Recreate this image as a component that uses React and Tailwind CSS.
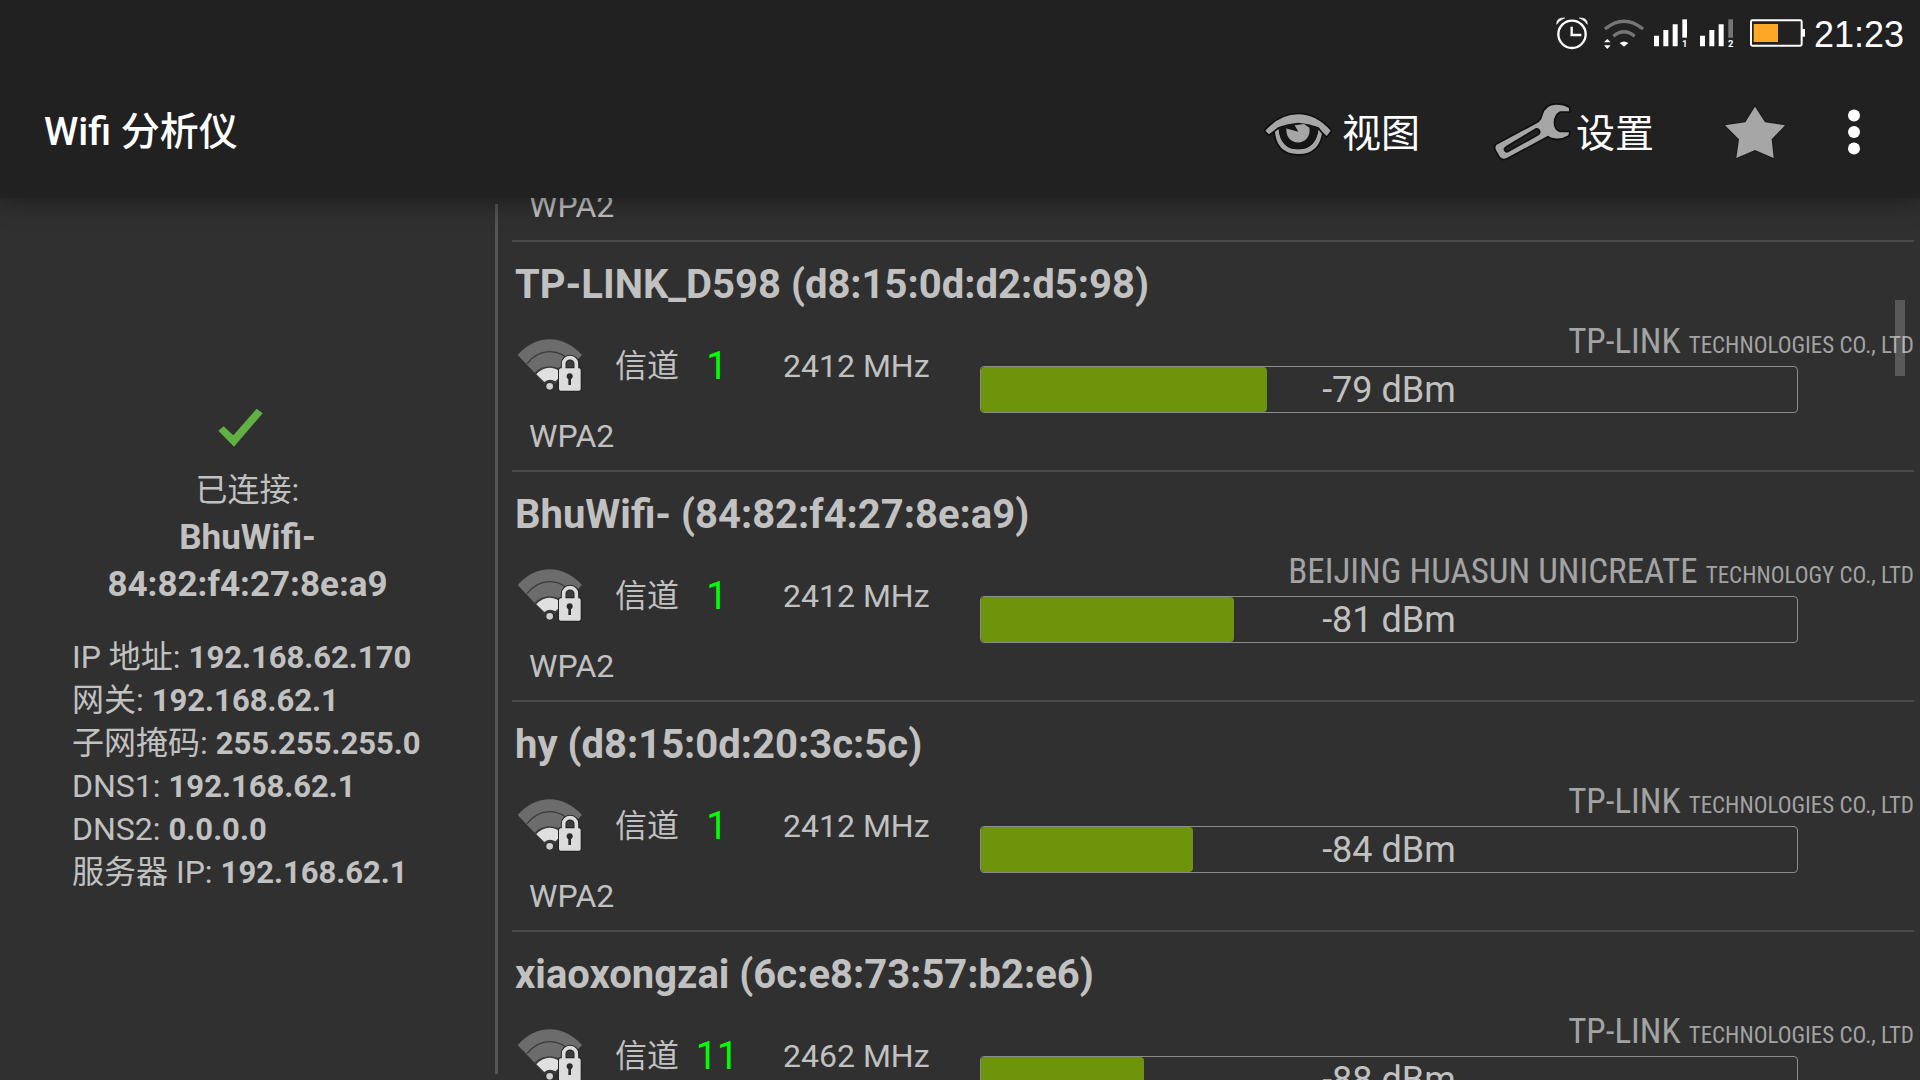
import React from "react";

const networks = [
  {
    name: "TP-LINK_D598 (d8:15:0d:d2:d5:98)",
    channel: 1,
    freq: 2412,
    level: -79,
    percent: 35,
    vendor: "TP-LINK",
    vendorRest: "TECHNOLOGIES CO., LTD",
  },
  {
    name: "BhuWifi- (84:82:f4:27:8e:a9)",
    channel: 1,
    freq: 2412,
    level: -81,
    percent: 31,
    vendor: "BEIJING HUASUN UNICREATE",
    vendorRest: "TECHNOLOGY CO., LTD",
  },
  {
    name: "hy (d8:15:0d:20:3c:5c)",
    channel: 1,
    freq: 2412,
    level: -84,
    percent: 26,
    vendor: "TP-LINK",
    vendorRest: "TECHNOLOGIES CO., LTD",
  },
  {
    name: "xiaoxongzai (6c:e8:73:57:b2:e6)",
    channel: 11,
    freq: 2462,
    level: -88,
    percent: 20,
    vendor: "TP-LINK",
    vendorRest: "TECHNOLOGIES CO., LTD",
  },
];

const details = [
  ["IP 地址:", "192.168.62.170"],
  ["网关:", "192.168.62.1"],
  ["子网掩码:", "255.255.255.0"],
  ["DNS1:", "192.168.62.1"],
  ["DNS2:", "0.0.0.0"],
  ["服务器 IP:", "192.168.62.1"],
];

const AlarmIcon = () => (
  <svg className="w-[42px] h-[50px]" viewBox="0 0 126 150" fill="none">
    <circle cx="66" cy="73" r="41" stroke="#fff" strokeWidth="7" />
    <path d="M65 50v25h29" stroke="#fff" strokeWidth="7" />
    <path d="M20 43Q20 22 44 24Q28 30 20 43ZM112 43Q112 22 88 24Q104 30 112 43Z" fill="#fff" stroke="#fff" strokeWidth="2" />
  </svg>
);

const StatusWifiIcon = () => (
  <svg className="w-[46px] h-[50px]" viewBox="0 0 138 150" fill="none">
    <path d="M15 57Q72 10 129 57" stroke="#757575" strokeWidth="10" />
    <path d="M40 79Q72 52 104 79" stroke="#757575" strokeWidth="10" />
    <path d="M59 99Q72 90 85 99L72 110Z" fill="#fff" />
    <path d="M12 97L22 87L32 97ZM12 106L22 117L32 106Z" fill="#fff" />
  </svg>
);

const SignalIcon = ({ sim, lastColor }) => (
  <svg className="w-[38px] h-[50px]" viewBox="0 0 114 150" fill="#fff">
    <path d="M0 77h15v32H0ZM28 60h15v49H28ZM56 43h15v66H56Z" />
    <path d="M85 28h14v55H85Z" fill={lastColor} />
    <text x="92" y="110" fontSize="28" fontWeight="700" textAnchor="middle">
      {sim}
    </text>
  </svg>
);

const BatteryIcon = () => (
  <svg className="w-[60px] h-[50px]" viewBox="0 0 180 150">
    <rect x="15" y="31" width="152" height="76" rx="4" fill="none" stroke="#fff" strokeWidth="6" />
    <path d="M168 57h9v23h-9Z" fill="#fff" />
    <path d="M23 42h73v54H23Z" fill="#ffa726" />
  </svg>
);

const EyeIcon = () => (
  <svg className="w-[82px] h-16" viewBox="0 0 246 192">
    <g fill="#a6a6a6" stroke="#0f0f0f" strokeWidth="10" strokeLinejoin="round" paintOrder="stroke">
      <path d="M44 88Q48 162 114 162Q180 162 187 92L175 88Q168 148 114 148Q62 148 56 88Z" />
      <path d="M16 92Q60 43 114 43Q168 43 212 92L200 108Q186 96 176 82Q148 72 114 72Q80 72 54 82Q42 92 27 103Z" />
    </g>
    <path d="M56 86Q80 70 114 68Q150 70 176 86Q168 148 114 148Q62 148 56 86Z" fill="#151515" />
    <path d="M80 83A35 36 0 1 0 148 83L132 72L104 76L115 95L82 86Z" fill="#a6a6a6" />
  </svg>
);

const WrenchIcon = () => (
  <svg className="w-24 h-16" viewBox="0 0 288 192">
    <path
      d="M50 134L176 67Q186 58 188 46Q196 14 228 14Q252 14 267 24V34H240Q222 42 221 68Q221 90 240 97H267L265 106Q246 118 224 115Q212 113 204 107L80 174Q68 180 60 170L48 150Q44 140 50 134ZM72 144Q68 150 76 157Q80 160 86 156L176 106Q184 100 181 92Q178 82 168 84L78 138Z"
      fill="#a6a6a6"
      fillRule="evenodd"
      stroke="#0f0f0f"
      strokeWidth="10"
      strokeLinejoin="round"
      paintOrder="stroke"
    />
  </svg>
);

const StarIcon = () => (
  <svg className="w-[72px] h-16" viewBox="0 0 216 192">
    <path
      d="M123 20L153 67L213 76L173 118L179 174L123 150L67 174L75 118L33 76L94 67Z"
      fill="#a6a6a6"
      stroke="#1a1a1a"
      strokeWidth="6"
      paintOrder="stroke"
    />
  </svg>
);

const DotsIcon = () => (
  <svg className="w-4 h-16" viewBox="0 0 16 64" fill="#fff">
    <circle cx="8" cy="15.5" r="6" />
    <circle cx="8" cy="32" r="6" />
    <circle cx="8" cy="48.5" r="6" />
  </svg>
);

const CheckIcon = () => (
  <svg className="w-[60px] h-10" viewBox="0 0 180 120">
    <path d="M1 68L17 55L46 82L116 2L134 16L48 116Z" fill="#60b044" />
  </svg>
);

const LockedWifiIcon = () => (
  <svg className="w-[72px] h-[60px]" viewBox="-3 0 216 180">
    <path d="M5 57Q48 10 101 10Q154 10 198 57L101 158Z" fill="#6c6c6c" />
    <path d="M33 83Q62 47 101 47Q142 47 170 83" fill="none" stroke="#3a3a3a" strokeWidth="4" />
    <path d="M56 110Q76 91 101 91Q126 91 146 110L101 158Z" fill="#3a3a3a" />
    <path d="M61 115Q78 95 101 95Q124 95 141 115L118 136Q101 126 85 138Z" fill="#e0e0e0" />
    <circle cx="101" cy="152" r="15" fill="#303030" />
    <circle cx="101" cy="151" r="10" fill="#d0d0d0" />
    <path d="M143 99V83a19 18 0 0 1 38 0V99" fill="#3c3c3c" stroke="#222" strokeWidth="17" />
    <rect x="126" y="94" width="71" height="73" rx="7" fill="#222" />
    <path d="M143 99V83a19 18 0 0 1 38 0V99" fill="none" stroke="#dcdcdc" strokeWidth="11" />
    <rect x="129" y="97" width="65" height="67" rx="5" fill="#dcdcdc" />
    <circle cx="161" cy="121" r="9" fill="#2a2a2a" />
    <path d="M157 121h8v26h-8Z" fill="#2a2a2a" />
  </svg>
);

const SignalBar = ({ level, percent }) => (
  <div
    role="meter"
    aria-label="dBm"
    aria-valuemin={-100}
    aria-valuemax={-40}
    aria-valuenow={level}
    className="relative h-[47px] mr-[116px] border border-[#8c8c8c] rounded"
  >
    <div className="h-full bg-[#6d940a] rounded" style={{ width: `${percent}%` }}></div>
    <span className="absolute inset-0 flex items-center justify-center text-[36px]">
      {level} dBm
    </span>
  </div>
);

const NetworkRow = ({ network }) => (
  <li className="shrink-0 pt-[18px] pb-5 pl-[3px] border-b-2 border-[#4a4a4a]">
    <h2 className="text-[40px] leading-[50px] font-bold">{network.name}</h2>
    <div className="grid grid-cols-[100px_64px_76px_225px_1fr] h-[112px] items-center">
      <LockedWifiIcon />
      <span>信道</span>
      <span className="text-[38px] text-center text-[#00ff00]">{network.channel}</span>
      <span className="pl-7">{network.freq} MHz</span>
      <div className="self-start pt-2">
        <p className="text-[35px] leading-[48px] text-right text-[#a3a3a3] whitespace-nowrap font-['Roboto_Condensed',Roboto,sans-serif]">
          {network.vendor}{" "}
          <span className="text-[23px] leading-none">{network.vendorRest}</span>
        </p>
        <SignalBar level={network.level} percent={network.percent} />
      </div>
    </div>
    <p className="pl-3.5 leading-[28px]">WPA2</p>
  </li>
);

const App = () => {
  return (
    <div className="flex flex-col h-screen overflow-hidden bg-[#303030] text-[#c1c1c1] text-[32px] font-[Roboto,'Noto_Sans_CJK_SC',sans-serif]">
      <header className="relative z-10 shrink-0 bg-[#212121] text-white shadow-[0_4px_24px_rgba(0,0,0,0.4)]">
        <div className="flex items-center justify-end gap-2 h-[66px] pt-1 pr-4">
          <AlarmIcon />
          <StatusWifiIcon />
          <SignalIcon sim="1" lastColor="#ffffff" />
          <SignalIcon sim="2" lastColor="#757575" />
          <BatteryIcon />
          <span className="text-[36px] font-['Liberation_Sans',sans-serif]">21:23</span>
        </div>
        <div className="flex items-center justify-between h-[132px] pl-11 pr-[58px] text-[39px]">
          <h1 className="font-medium">Wifi 分析仪</h1>
          <nav className="flex items-center gap-15">
            <button className="flex items-center">
              <EyeIcon />
              <span className="pt-1">视图</span>
            </button>
            <button className="flex items-center">
              <WrenchIcon />
              <span className="pt-1">设置</span>
            </button>
            <button aria-label="收藏">
              <StarIcon />
            </button>
            <button aria-label="更多">
              <DotsIcon />
            </button>
          </nav>
        </div>
      </header>

      <main className="relative flex grow min-h-0">
        <aside className="w-[498px] shrink-0 my-1.5 pt-[204px] border-r-3 border-[#555555]">
          <div className="flex flex-col items-center text-center">
            <CheckIcon />
            <p className="mt-[19px] leading-[47px]">已连接:</p>
            <p className="text-[35px] leading-[47px] font-bold">
              BhuWifi-
              <br />
              84:82:f4:27:8e:a9
            </p>
          </div>
          <dl className="mt-7 pl-[72px]">
            {details.map(([label, value]) => (
              <div key={label} className="flex items-baseline gap-2 leading-[43px]">
                <dt>{label}</dt>
                <dd className="text-[31px] font-bold">{value}</dd>
              </div>
            ))}
          </dl>
        </aside>

        <ul className="flex flex-col grow ml-3.5 mr-1.5 overflow-hidden">
          <li className="flex items-end shrink-0 h-11 pb-5 pl-[17px] border-b-2 border-[#4a4a4a]">
            <p className="leading-[28px]">WPA2</p>
          </li>
          {networks.map((network) => (
            <NetworkRow key={network.name} network={network} />
          ))}
        </ul>
        <div className="absolute top-[102px] right-[15px] w-2.5 h-[76px] bg-white/20"></div>
      </main>
    </div>
  );
};
export default App;
